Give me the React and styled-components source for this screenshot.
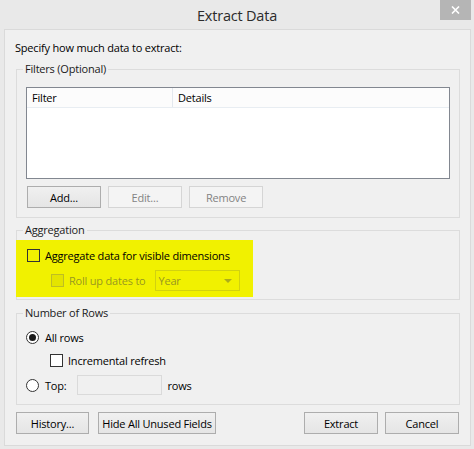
import React from "react";
import styled, { createGlobalStyle } from "styled-components";

const Global = createGlobalStyle`
  html, body { margin: 0; padding: 0; background: #e9e9e9; }
  body {
    font-family: "Open Sans", "Noto Sans", "Liberation Sans", sans-serif;
    font-size: 11px;
    letter-spacing: -0.2px;
    color: #000;
  }
  * { box-sizing: border-box; }
`;

const Window = styled.div`
  width: 474px;
  height: 449px;
  background: #e9e9e9;
  display: flex;
  flex-direction: column;
`;

const TitleBar = styled.div`
  height: 29px;
  display: grid;
  grid-template-columns: 1fr auto 1fr;
  align-items: start;
`;

const Title = styled.div`
  grid-column: 2;
  font-size: 14.5px;
  line-height: 29px;
  color: #2b2b2b;
  margin-top: 1px;
`;

const CloseButton = styled.div`
  grid-column: 3;
  justify-self: end;
  width: 31px;
  height: 20px;
  margin-right: 3px;
  background: #b5b5b5;
  display: flex;
  align-items: center;
  justify-content: center;
`;

const Client = styled.div`
  margin: 0 3px 0 4px;
  height: 417px;
  border: 1px solid #dadada;
  background: #f0f0f0;
  padding: 10px 10px 0 11px;
  display: flex;
  flex-direction: column;
`;

const Prompt = styled.div`
  height: 16px;
  line-height: 16px;
  margin-left: -1px;
`;

const Group = styled.div`
  position: relative;
  border: 1px solid #dcdcdc;
  margin-top: ${(p) => p.$mt}px;
  height: ${(p) => p.$h}px;
  padding: ${(p) => p.$pt}px 9px 0 9px;
  display: flex;
  flex-direction: column;
`;

const Legend = styled.span`
  position: absolute;
  top: -9px;
  left: 6px;
  padding: 0 2px;
  background: #f0f0f0;
  line-height: 16px;
  color: #1a1a1a;
`;

const ListBox = styled.div`
  height: 92px;
  border: 1px solid #828790;
  background: #fff;
`;

const ListHeader = styled.div`
  height: 20px;
  display: grid;
  grid-template-columns: 146px 1fr;
  background: #fcfcfc;
  border-bottom: 1px solid #e8edf2;
`;

const HeaderCell = styled.div`
  padding-left: 5px;
  line-height: 19px;
  border-right: ${(p) => (p.$divider ? "1px solid #e3e8ee" : "none")};
`;

const ButtonRow = styled.div`
  display: flex;
  gap: ${(p) => p.$gap ?? 7}px;
  margin-top: ${(p) => p.$mt ?? 0}px;
  margin-left: ${(p) => p.$ml ?? 0}px;
`;

const Button = styled.div`
  width: ${(p) => p.$w ?? 74}px;
  height: 22px;
  display: flex;
  align-items: center;
  justify-content: center;
  white-space: nowrap;
  border: 1px solid ${(p) => (p.$disabled ? "#d5d5d5" : "#adadad")};
  background: ${(p) =>
    p.$disabled ? "#f4f4f4" : "linear-gradient(#f0f0f0, #e5e5e5)"};
  color: ${(p) => (p.$disabled ? "#838383" : "#000")};
`;

const Highlight = styled.div`
  margin-left: -10px;
  width: 237px;
  height: 57px;
  background: #f1f100;
  padding: 9px 0 0 11px;
  display: flex;
  flex-direction: column;
  gap: 8px;
`;

const Row = styled.div`
  display: flex;
  align-items: center;
  white-space: nowrap;
  height: ${(p) => p.$h ?? 13}px;
  margin-left: ${(p) => p.$indent ?? 0}px;
  margin-top: ${(p) => p.$mt ?? 0}px;
  color: ${(p) => (p.$disabled ? "rgba(70,70,60,0.55)" : "#000")};
`;

const CheckBox = styled.span`
  width: 13px;
  height: 13px;
  flex: none;
  border: 1px solid ${(p) => (p.$disabled ? "rgba(120,120,100,0.35)" : "#333")};
  background: ${(p) => (p.$disabled ? "rgba(0,0,0,0.05)" : p.$bg ?? "#fff")};
  margin-right: 5px;
`;

const Radio = styled.span`
  width: 13px;
  height: 13px;
  flex: none;
  border-radius: 50%;
  border: 1px solid #333;
  background: #fff;
  display: flex;
  align-items: center;
  justify-content: center;
  margin-right: 6px;
  &::after {
    content: "";
    display: ${(p) => (p.$checked ? "block" : "none")};
    width: 7px;
    height: 7px;
    border-radius: 50%;
    background: #1a1a1a;
  }
`;

const Combo = styled.div`
  width: 85px;
  height: 21px;
  margin-left: 9px;
  border: 1px solid rgba(120, 120, 60, 0.25);
  display: flex;
  align-items: center;
  justify-content: space-between;
  padding: 0 7px 0 3px;
`;

const Arrow = styled.span`
  width: 0;
  height: 0;
  border-left: 4px solid transparent;
  border-right: 4px solid transparent;
  border-top: 4px solid rgba(90, 90, 60, 0.45);
`;

const TextBox = styled.div`
  width: 85px;
  height: 20px;
  border: 1px solid #dadada;
  background: #f0f0f0;
  margin: 0 6px 0 10px;
`;

const Footer = styled.div`
  display: flex;
  justify-content: space-between;
  margin-top: 7px;
  padding-right: 1px;
`;

export default function App() {
  return (
    <Window>
      <Global />
      <TitleBar>
        <Title>Extract Data</Title>
        <CloseButton>
          <svg width="9" height="8" viewBox="0 0 9 8">
            <path d="M1 0.5 L8 7.5 M8 0.5 L1 7.5" stroke="#fff" strokeWidth="1.6" />
          </svg>
        </CloseButton>
      </TitleBar>
      <Client>
        <Prompt>Specify how much data to extract:</Prompt>

        <Group $mt={13} $h={149} $pt={17}>
          <Legend>Filters (Optional)</Legend>
          <ListBox>
            <ListHeader>
              <HeaderCell $divider>Filter</HeaderCell>
              <HeaderCell>Details</HeaderCell>
            </ListHeader>
          </ListBox>
          <ButtonRow $mt={7} $ml={1}>
            <Button>Add...</Button>
            <Button $disabled>Edit...</Button>
            <Button $disabled>Remove</Button>
          </ButtonRow>
        </Group>

        <Group $mt={12} $h={70} $pt={9}>
          <Legend>Aggregation</Legend>
          <Highlight>
            <Row>
              <CheckBox $bg="transparent" />
              Aggregate data for visible dimensions
            </Row>
            <Row $h={21} $indent={24} $disabled>
              <CheckBox $disabled />
              Roll up dates to
              <Combo>
                Year
                <Arrow />
              </Combo>
            </Row>
          </Highlight>
        </Group>

        <Group $mt={13} $h={92} $pt={17}>
          <Legend>Number of Rows</Legend>
          <Row>
            <Radio $checked />
            All rows
          </Row>
          <Row $indent={24} $mt={10}>
            <CheckBox />
            Incremental refresh
          </Row>
          <Row $h={20} $mt={8}>
            <Radio />
            Top:
            <TextBox />
            rows
          </Row>
        </Group>

        <Footer>
          <ButtonRow $gap={9}>
            <Button $w={73}>History...</Button>
            <Button $w={118}>Hide All Unused Fields</Button>
          </ButtonRow>
          <ButtonRow $gap={7}>
            <Button>Extract</Button>
            <Button>Cancel</Button>
          </ButtonRow>
        </Footer>
      </Client>
    </Window>
  );
}
